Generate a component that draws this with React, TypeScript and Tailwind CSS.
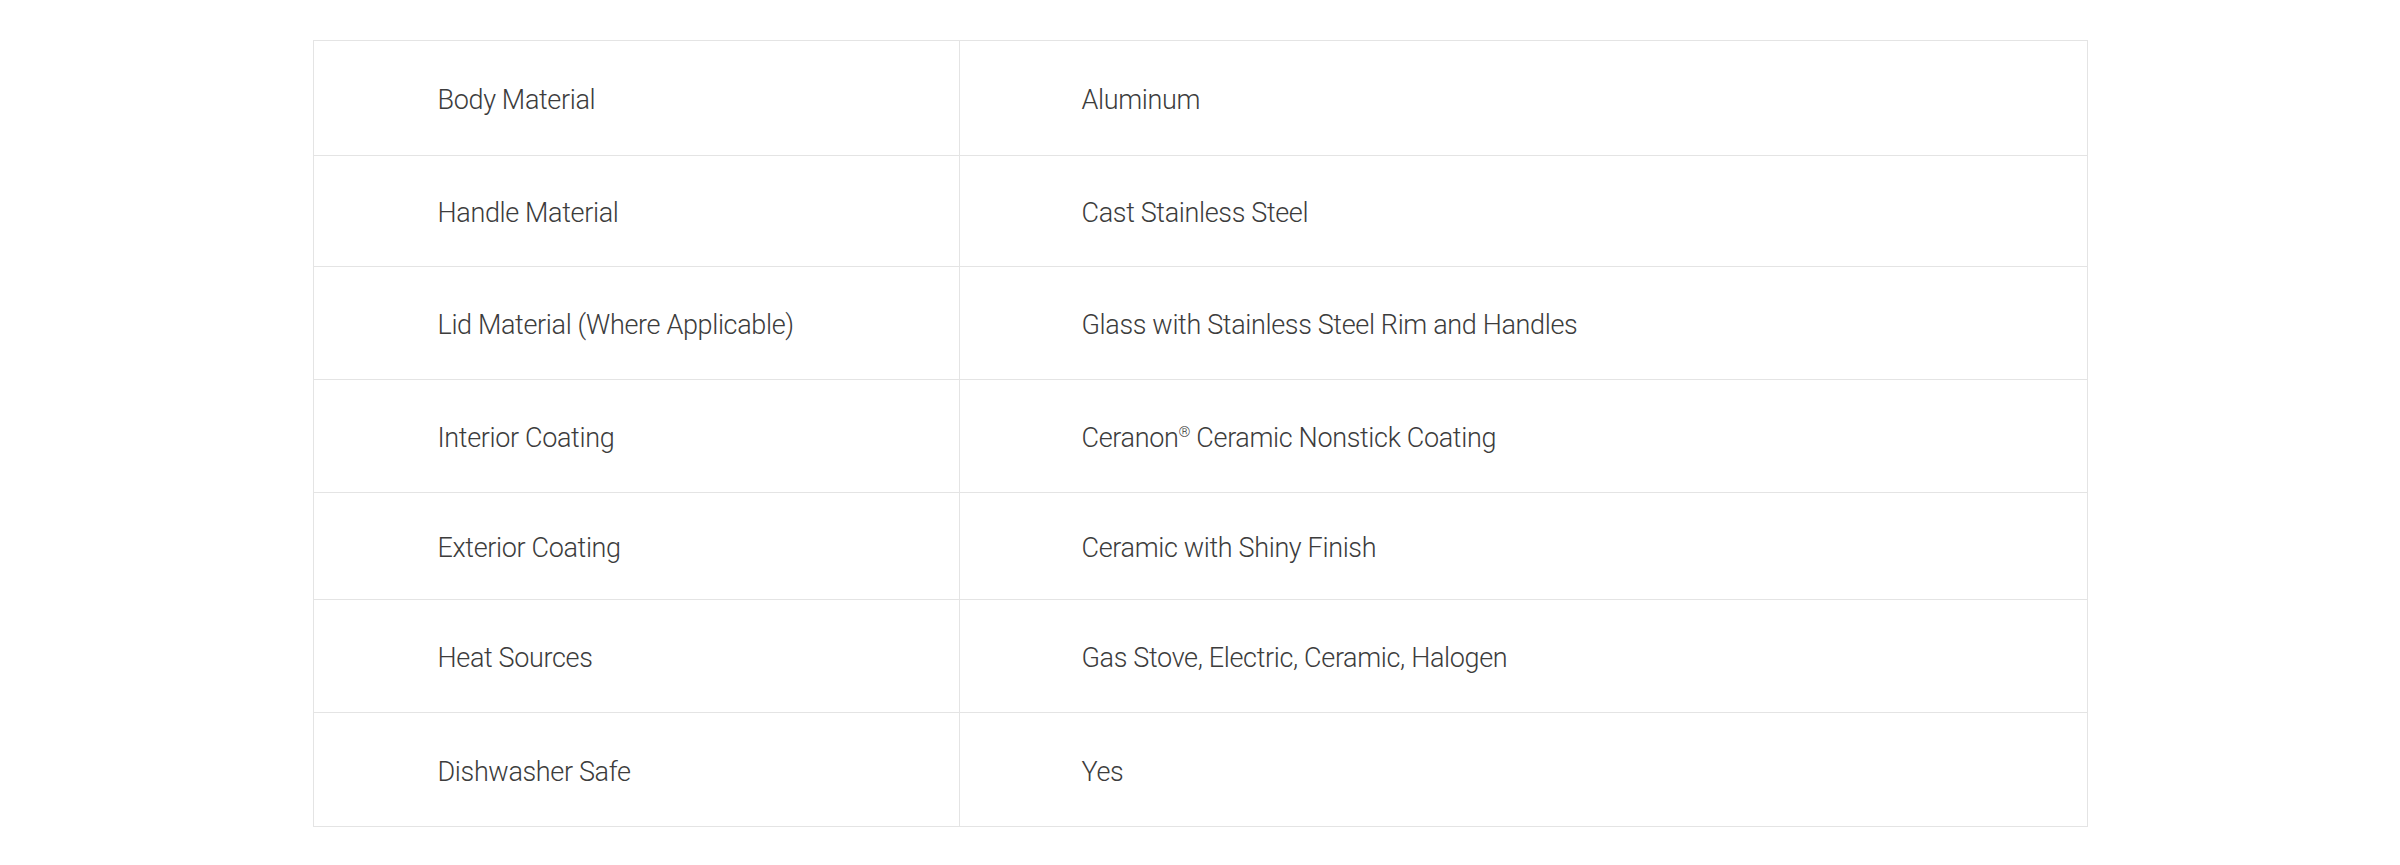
const specs = [
  { label: "Body Material", value: "Aluminum", h: "h-[115px]" },
  { label: "Handle Material", value: "Cast Stainless Steel", h: "h-[111px]" },
  { label: "Lid Material (Where Applicable)", value: "Glass with Stainless Steel Rim and Handles", h: "h-[113px]" },
  { label: "Interior Coating", value: "Ceranon® Ceramic Nonstick Coating", h: "h-[113px]" },
  { label: "Exterior Coating", value: "Ceramic with Shiny Finish", h: "h-[107px]" },
  { label: "Heat Sources", value: "Gas Stove, Electric, Ceramic, Halogen", h: "h-[113px]" },
  { label: "Dishwasher Safe", value: "Yes", h: "h-[113px]" },
];

function Value({ text }: { text: string }) {
  if (!text.includes("®")) return <>{text}</>;
  const [a, b] = text.split("®");
  return (
    <>
      {a}
      <sup className="text-[15px] top-[-0.7em]">®</sup>
      {b}
    </>
  );
}

export default function App() {
  return (
    <div className="min-h-[865px] w-full bg-white pt-[40px] font-['Roboto',sans-serif] font-light text-[27px] tracking-[-0.35px] text-[#3c3c3c]">
      <div className="mx-auto w-[1775px] border border-[#e4e4e4]">
        {specs.map((row, i) => (
          <div
            key={row.label}
            className={`flex ${row.h} ${i < specs.length - 1 ? "border-b border-[#e4e4e4]" : ""}`}
          >
            <div className="flex w-[646px] shrink-0 items-center border-r border-[#e4e4e4] pl-[124px] pt-[5px]">
              {row.label}
            </div>
            <div className="flex flex-1 items-center pl-[122px] pt-[5px]">
              <span>
                <Value text={row.value} />
              </span>
            </div>
          </div>
        ))}
      </div>
    </div>
  );
}
